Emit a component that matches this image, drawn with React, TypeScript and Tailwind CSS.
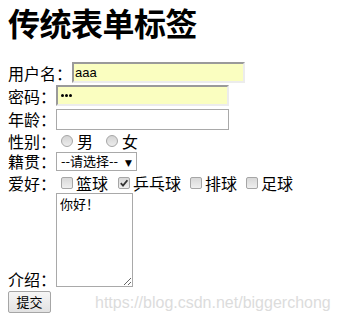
import React from "react";

const cjk = { fontFamily: '"Noto Sans CJK SC", "Noto Sans", sans-serif' };

function Radio() {
  return (
    <span className="inline-block w-[12px] h-[12px] rounded-full border border-[#a6a6a6] bg-gradient-to-b from-[#d4d4d4] to-[#ececec] ml-[5px] mr-[4px] shrink-0" />
  );
}

function Checkbox({ checked = false }: { checked?: boolean }) {
  return (
    <span className="relative inline-flex items-center justify-center w-[12px] h-[12px] rounded-[2px] border border-[#a6a6a6] bg-gradient-to-b from-[#d8d8d8] to-[#efefef] ml-[5px] mr-[3px] shrink-0">
      {checked && (
        <svg width="10" height="10" viewBox="0 0 10 10" className="absolute">
          <path d="M1.8 5.2 L4 7.6 L8.4 2.2" fill="none" stroke="#333" strokeWidth="1.8" />
        </svg>
      )}
    </span>
  );
}

function Dot() {
  return <span className="inline-block w-[3px] h-[3px] rounded-full bg-black mr-[1px]" />;
}

export default function App() {
  return (
    <div className="relative w-[337px] h-[320px] bg-white text-black overflow-hidden px-2 leading-[18px]" style={cjk}>
      <div className="h-[43px] flex items-center">
        <h1 className="text-[32px] font-bold leading-[40px] tracking-[-0.5px]" style={cjk}>传统表单标签</h1>
      </div>
      <div className="h-[18px]" />
      <div className="h-[23px] flex items-center text-[16px]">
        <span>用户名：</span>
        <div className="w-[173px] h-[21px] bg-[#fafec0] border-2 border-t-[#9a9a9a] border-l-[#9a9a9a] border-r-[#ececec] border-b-[#ececec] flex items-center px-[1px] text-[13px]" style={{ fontFamily: '"Liberation Sans", Arial, sans-serif' }}>
          aaa
        </div>
      </div>
      <div className="h-[23px] flex items-center text-[16px]">
        <span>密码：</span>
        <div className="w-[173px] h-[21px] bg-[#fafec0] border-2 border-t-[#9a9a9a] border-l-[#9a9a9a] border-r-[#ececec] border-b-[#ececec] flex items-center pl-[3px]">
          <Dot />
          <Dot />
          <Dot />
        </div>
      </div>
      <div className="h-[24px] flex items-center text-[16px]">
        <span>年龄：</span>
        <div className="w-[173px] h-[21px] bg-white border border-[#a9a9a9]" />
      </div>
      <div className="h-[19px] flex items-center text-[16px]">
        <span>性别：</span>
        <Radio />
        <span>男</span>
        <span className="w-[8px]" />
        <Radio />
        <span>女</span>
      </div>
      <div className="h-[22px] flex items-center text-[16px]">
        <span>籍贯：</span>
        <div className="w-[81px] h-[19px] border border-[#a9a9a9] bg-white flex items-center pl-[4px] text-[13px] relative">
          <span>--请选择--</span>
          <span className="absolute right-[4px] top-[1px] text-[9px]" style={{ fontFamily: '"DejaVu Sans", sans-serif' }}>▼</span>
        </div>
      </div>
      <div className="h-[21px] flex items-center text-[16px]">
        <span>爱好：</span>
        <Checkbox />
        <span>篮球</span>
        <span className="w-[5px]" />
        <Checkbox checked />
        <span>乒乓球</span>
        <span className="w-[4px]" />
        <Checkbox />
        <span>排球</span>
        <span className="w-[4px]" />
        <Checkbox />
        <span>足球</span>
      </div>
      <div className="flex items-end text-[16px]">
        <span className="leading-[18px] mb-[-1px]">介绍：</span>
        <textarea
          readOnly
          defaultValue="你好！"
          className="w-[77px] h-[94px] border border-[#a9a9a9] text-[13px] leading-[16px] px-[3px] py-[2px] outline-none"
          style={cjk}
        />
      </div>
      <div className="mt-[4px]">
        <button className="w-[43px] h-[22px] border border-[#a6a6a6] rounded-[2px] bg-gradient-to-b from-[#f6f6f6] to-[#e2e2e2] text-[13px] leading-[16px] flex items-center justify-center" style={cjk}>
          提交
        </button>
      </div>
      <div
        className="absolute left-[95px] top-[294px] text-[16px] leading-[18px] text-[#dcdcdc] pointer-events-none"
        style={{ fontFamily: '"Liberation Sans", Arial, sans-serif' }}
      >
        https://blog.csdn.net/biggerchong
      </div>
    </div>
  );
}
